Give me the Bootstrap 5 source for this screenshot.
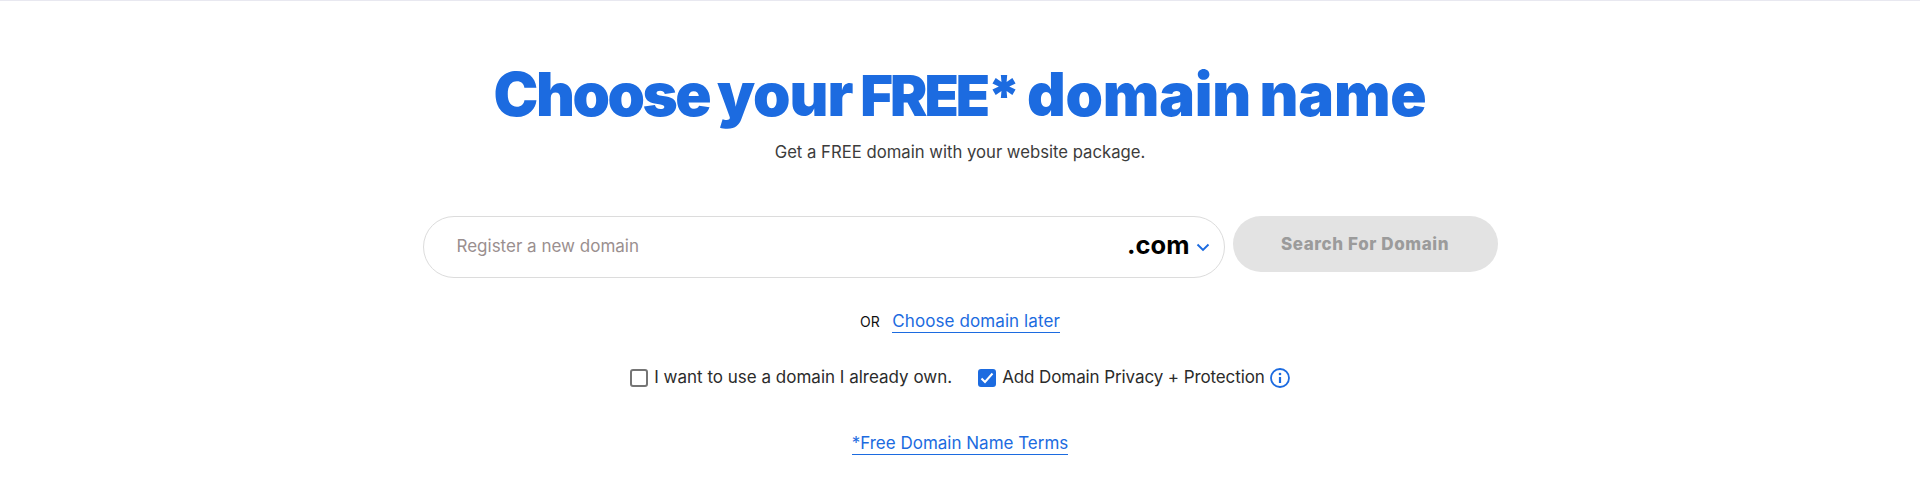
<!DOCTYPE html>
<html lang="en"><head><meta charset="utf-8"><title>Choose your FREE domain name</title>
<link href="https://cdn.jsdelivr.net/npm/bootstrap@5.3.0/dist/css/bootstrap.min.css" rel="stylesheet">
<style>
html,body{height:477px;overflow:hidden}
body{font-family:Inter,"Noto Sans",sans-serif;background:#fff;color:#333}
.page-wrap{border-top:1px solid #e8e8f0;padding-top:58px}
.hero-title{font-size:60px;line-height:70px;font-weight:900;color:#1c6be0;letter-spacing:-1.05px;word-spacing:-3px;margin:0}
.tight-word{letter-spacing:-2.5px}
.free-word{font-size:56px;letter-spacing:-3px;margin-right:1px}
.open-words{letter-spacing:-.25px}
.hero-sub{font-size:16.7px;line-height:24px;color:#3c3c3c;margin:9px 0 0}
.search-row{margin-top:52px;width:1075px;gap:8px}
.domain-box{width:802px;height:62px;border:1px solid #dcdcdc;border-radius:31px;padding:0 14px 0 33px}
.domain-input{border:0;outline:0;flex:1;min-width:0;font-size:17px;color:#333;background:transparent;font-family:inherit;padding:0}
.domain-input::placeholder{color:#9a8f8f;opacity:1}
.tld{font-size:25.5px;font-weight:700;color:#000;line-height:1;margin:0 6px 4px 0}
.search-btn{width:265px;height:56px;border-radius:28px;border:0;background:#e3e3e3;color:#9b9b9b;font-weight:800;font-size:17px;letter-spacing:.6px;padding:2px 0 0}
.or-line{margin-top:31px;line-height:24px}
.or-text{font-size:14px;color:#111;margin-right:8px}
.blue-link{color:#1c6be0;text-decoration:none;border-bottom:1px solid #1c6be0;font-size:17px;line-height:21px;display:inline-block}
.later-link{letter-spacing:.1px}
.check-row{margin-top:31px;gap:26px;font-size:17px;color:#2b2b2b}
.box-mark{width:18px;height:18px;border:2px solid #757575;border-radius:3px;display:inline-block;flex:none}
.box-on{background:#1c6be0;border-color:#1c6be0;display:inline-flex;align-items:center;justify-content:center}
.check-item{gap:6px}
.privacy-item{letter-spacing:-.1px}
.info-mark{margin-left:-1px}
.terms-line{margin-top:40px}
</style></head>
<body>
<div class="page-wrap text-center">
<h1 class="hero-title"><span class="tight-word">Choose</span> your <span class="free-word">FREE*</span> <span class="open-words">domain name</span></h1>
<p class="hero-sub">Get a FREE domain with your website package.</p>
<div class="d-flex search-row mx-auto align-items-start">
<div class="domain-box d-flex align-items-center">
<input class="domain-input" type="text" placeholder="Register a new domain" aria-label="Register a new domain">
<span class="tld">.com</span>
<svg width="14" height="9" viewBox="0 0 14 9" aria-hidden="true"><path d="M1.5 1.5l5.5 5.5 5.5-5.5" fill="none" stroke="#1c6be0" stroke-width="1.9"/></svg>
</div>
<button class="search-btn" type="button">Search For Domain</button>
</div>
<div class="or-line"><span class="or-text">OR</span> <a class="blue-link later-link" href="#">Choose domain later</a></div>
<div class="check-row d-flex justify-content-center align-items-center">
<span class="check-item d-inline-flex align-items-center"><span class="box-mark"></span>I want to use a domain I already own.</span>
<span class="check-item privacy-item d-inline-flex align-items-center"><span class="box-mark box-on"><svg width="14" height="12" viewBox="0 0 14 12" aria-hidden="true"><path d="M1.5 6.5l3.5 3.5 7.5-8.5" fill="none" stroke="#fff" stroke-width="2"/></svg></span>Add Domain Privacy + Protection
<svg class="info-mark" width="20" height="20" viewBox="0 0 20 20" aria-hidden="true"><circle cx="10" cy="10" r="9" fill="none" stroke="#1c6be0" stroke-width="1.8"/><circle cx="10" cy="6" r="1.3" fill="#1c6be0"/><path d="M10 9v6" stroke="#1c6be0" stroke-width="2.2"/></svg></span>
</div>
<div class="terms-line"><a class="blue-link" href="#">*Free Domain Name Terms</a></div>
</div>
<script src="https://cdn.jsdelivr.net/npm/bootstrap@5.3.0/dist/js/bootstrap.bundle.min.js"></script>
</body></html>
